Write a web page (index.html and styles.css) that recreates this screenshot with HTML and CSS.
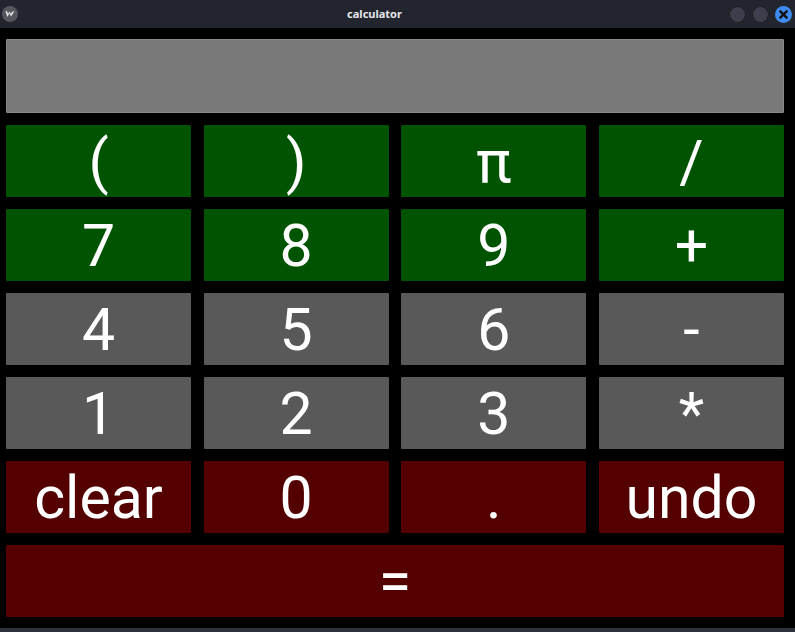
FILE: index.html
```html
<!DOCTYPE html>
<html>
<head>
<meta charset="utf-8">
<link rel="stylesheet" href="styles.css">
</head>
<body>
<div class="window">
  <div class="titlebar">
    <div class="app-icon">
      <svg width="16" height="16" viewBox="0 0 16 16">
        <circle cx="8" cy="8" r="8" fill="#55575f"/>
        <path d="M3.5 5.5 L5.5 11 L7.5 7 L9 10.5 L12.5 5 L10 6 L9 8 L7.5 5.5 L6 8 L5 5 Z" fill="#f0f0f0"/>
      </svg>
    </div>
    <div class="title">calculator</div>
    <div class="controls">
      <span class="ctl"></span>
      <span class="ctl"></span>
      <span class="ctl close">
        <svg width="17" height="17" viewBox="0 0 16 16"><path d="M5 5 L11 11 M11 5 L5 11" stroke="#111" stroke-width="2.2" stroke-linecap="round"/></svg>
      </span>
    </div>
  </div>
  <div class="content">
    <div class="display"></div>
    <div class="row">
      <div class="btn green">(</div>
      <div class="btn green">)</div>
      <div class="btn green">π</div>
      <div class="btn green">/</div>
    </div>
    <div class="row">
      <div class="btn green">7</div>
      <div class="btn green">8</div>
      <div class="btn green">9</div>
      <div class="btn green">+</div>
    </div>
    <div class="row">
      <div class="btn gray">4</div>
      <div class="btn gray">5</div>
      <div class="btn gray">6</div>
      <div class="btn gray">-</div>
    </div>
    <div class="row">
      <div class="btn gray">1</div>
      <div class="btn gray">2</div>
      <div class="btn gray">3</div>
      <div class="btn gray">*</div>
    </div>
    <div class="row">
      <div class="btn red">clear</div>
      <div class="btn red">0</div>
      <div class="btn red">.</div>
      <div class="btn red">undo</div>
    </div>
    <div class="row single">
      <div class="btn red">=</div>
    </div>
  </div>
  <div class="bottombar"></div>
</div>
</body>
</html>
```

FILE: styles.css
```css
html, body {
  margin: 0;
  padding: 0;
  background: #000;
}
* {
  box-sizing: border-box;
}
.window {
  width: 795px;
  height: 632px;
  display: flex;
  flex-direction: column;
  background: #000;
  font-family: Roboto, "Noto Sans", sans-serif;
}
.titlebar {
  height: 28px;
  flex: none;
  background: #23252e;
  display: flex;
  align-items: center;
  position: relative;
}
.app-icon {
  width: 16px;
  height: 16px;
  margin-left: 2px;
  display: flex;
}
.title {
  position: absolute;
  left: 0;
  right: 46px;
  text-align: center;
  color: #e6e6ea;
  font-family: "Noto Sans", sans-serif;
  font-weight: bold;
  font-size: 11px;
  pointer-events: none;
  line-height: 28px;
}
.controls {
  margin-left: auto;
  margin-right: 3px;
  display: flex;
  gap: 6px;
}
.ctl {
  width: 17px;
  height: 17px;
  border-radius: 50%;
  background: #3d404c;
  box-shadow: inset 0 0 0 1px #1b1c22;
  display: flex;
}
.ctl.close {
  background: #3d8bf0;
  box-shadow: none;
}
.content {
  flex: 1;
  display: flex;
  flex-direction: column;
  gap: 12px;
  padding: 11px 11px 11px 6px;
}
.display {
  flex: 1;
  background: #797979;
  border: 1px solid #8a8a8a;
  border-radius: 1px;
}
.row {
  flex: 1;
  display: grid;
  grid-template-columns: repeat(4, 1fr);
  column-gap: 12.67px;
}
.row.single {
  grid-template-columns: 1fr;
}
.btn {
  display: flex;
  align-items: center;
  justify-content: center;
  color: #fff;
  font-size: 59px;
  line-height: 1;
  border-radius: 1px;
}
.green { background: #005300; }
.gray { background: #595959; }
.red { background: #550000; }
.bottombar {
  height: 4px;
  flex: none;
  background: #2e3039;
}
```
